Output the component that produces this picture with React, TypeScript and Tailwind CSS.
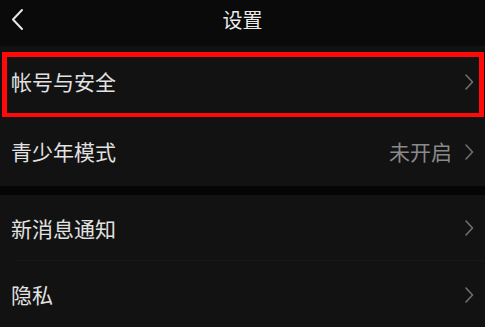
import React from 'react';

const font = { fontFamily: '"Noto Sans CJK SC", "Noto Sans", sans-serif' };

const Chevron = () => (
    <svg width="10" height="18" viewBox="0 0 10 18" className="shrink-0">
        <path d="M2 2 L8.5 9 L2 16" fill="none" stroke="#6f6f6f" strokeWidth="1.6" strokeLinecap="round" strokeLinejoin="round" />
    </svg>
);

interface RowProps {
    label: string;
    value?: string;
    height: string;
    divider?: boolean;
    highlight?: boolean;
}

const Row: React.FC<RowProps> = ({ label, value, height, divider, highlight }) => (
    <div className={`relative flex items-center bg-[#121212] pl-[11px] pr-[11px] ${height}`}>
        <span className="flex-1 text-[21px] text-[#e2e2e2] leading-none">{label}</span>
        {value && <span className="mr-[12px] text-[21px] text-[#8a8a8a] leading-none">{value}</span>}
        <Chevron />
        {divider && <div className="absolute bottom-0 left-[15px] right-0 h-px bg-[#181818]" />}
        {/* Annotation box */}
        {highlight && (
            <div className="absolute top-[6px] left-[2px] right-[1px] -bottom-[1px] border-[5px] border-[#ff0a0a] pointer-events-none" />
        )}
    </div>
);

export default function App() {
    return (
        <div className="w-[485px] h-[327px] overflow-hidden bg-[#050505]" style={font}>
            {/* Header */}
            <div className="relative flex h-[46px] items-center justify-center bg-[#0a0a0a]">
                <svg width="14" height="24" viewBox="0 0 14 24" className="absolute left-[10px] top-[8px]">
                    <path d="M12 2 L3 11.5 L12 21" fill="none" stroke="#e8e8e8" strokeWidth="2" strokeLinecap="round" strokeLinejoin="round" />
                </svg>
                <span className="text-[20px] text-[#ececec] leading-none -mt-[7px]">设置</span>
            </div>

            <Row label="帐号与安全" height="h-[71px]" highlight />
            <Row label="青少年模式" value="未开启" height="h-[69px]" />

            <div className="h-[9px] bg-[#050505]" />

            <Row label="新消息通知" height="h-[66px]" divider />
            <Row label="隐私" height="h-[67px]" />
        </div>
    );
}
